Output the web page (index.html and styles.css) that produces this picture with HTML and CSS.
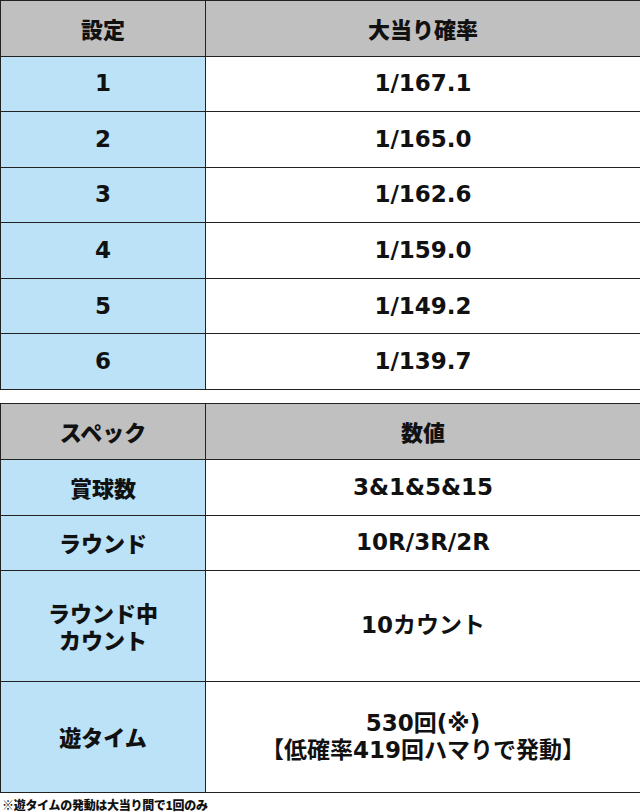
FILE: index.html
```html
<!DOCTYPE html>
<html lang="ja">
<head>
<meta charset="utf-8">
<link rel="stylesheet" href="styles.css">
</head>
<body>
<div class="page">
  <div class="table t1">
    <div class="cell head">設定</div><div class="cell head">大当り確率</div>
    <div class="cell key num">1</div><div class="cell val num">1/167.1</div>
    <div class="cell key num">2</div><div class="cell val num">1/165.0</div>
    <div class="cell key num">3</div><div class="cell val num">1/162.6</div>
    <div class="cell key num">4</div><div class="cell val num">1/159.0</div>
    <div class="cell key num">5</div><div class="cell val num">1/149.2</div>
    <div class="cell key num">6</div><div class="cell val num">1/139.7</div>
  </div>
  <div class="table t2">
    <div class="cell head">スペック</div><div class="cell head">数値</div>
    <div class="cell key">賞球数</div><div class="cell val num">3&amp;1&amp;5&amp;15</div>
    <div class="cell key">ラウンド</div><div class="cell val num">10R/3R/2R</div>
    <div class="cell key multi">ラウンド中<br>カウント</div><div class="cell val num">10カウント</div>
    <div class="cell key">遊タイム</div><div class="cell val num multi">530回(※)<br>【低確率419回ハマりで発動】</div>
  </div>
  <p class="note">※遊タイムの発動は大当り間で1回のみ</p>
</div>
</body>
</html>
```
FILE: styles.css
```css
html, body {
  margin: 0;
  padding: 0;
  background: #ffffff;
}
body {
  font-family: "Noto Sans CJK JP", sans-serif;
  font-weight: 900;
  color: #111111;
}
.page {
  width: 640px;
}
.table {
  display: grid;
  grid-template-columns: 205px 435px;
  border-top: 1px solid #222222;
  border-left: 1px solid #222222;
  box-sizing: border-box;
}
.t1 {
  grid-template-rows: repeat(7, 55.57px);
}
.t2 {
  margin-top: 13px;
  grid-template-rows: 56px 56px 55px 111px 111px;
}
.cell {
  display: flex;
  align-items: center;
  justify-content: center;
  text-align: center;
  border-right: 1px solid #222222;
  border-bottom: 1px solid #222222;
  font-size: 22px;
  line-height: 27px;
  box-sizing: border-box;
}
.head {
  background: #c0c0c0;
}
.key {
  background: #bbe2f7;
}
.val {
  background: #ffffff;
}
.num {
  font-family: "DejaVu Sans", "Noto Sans CJK JP", sans-serif;
  font-weight: 700;
  font-size: 23px;
}
.multi {
  line-height: 27px;
}
.note {
  margin: 5px 0 0 2px;
  font-size: 12px;
  line-height: 14px;
  letter-spacing: -0.3px;
}
```
